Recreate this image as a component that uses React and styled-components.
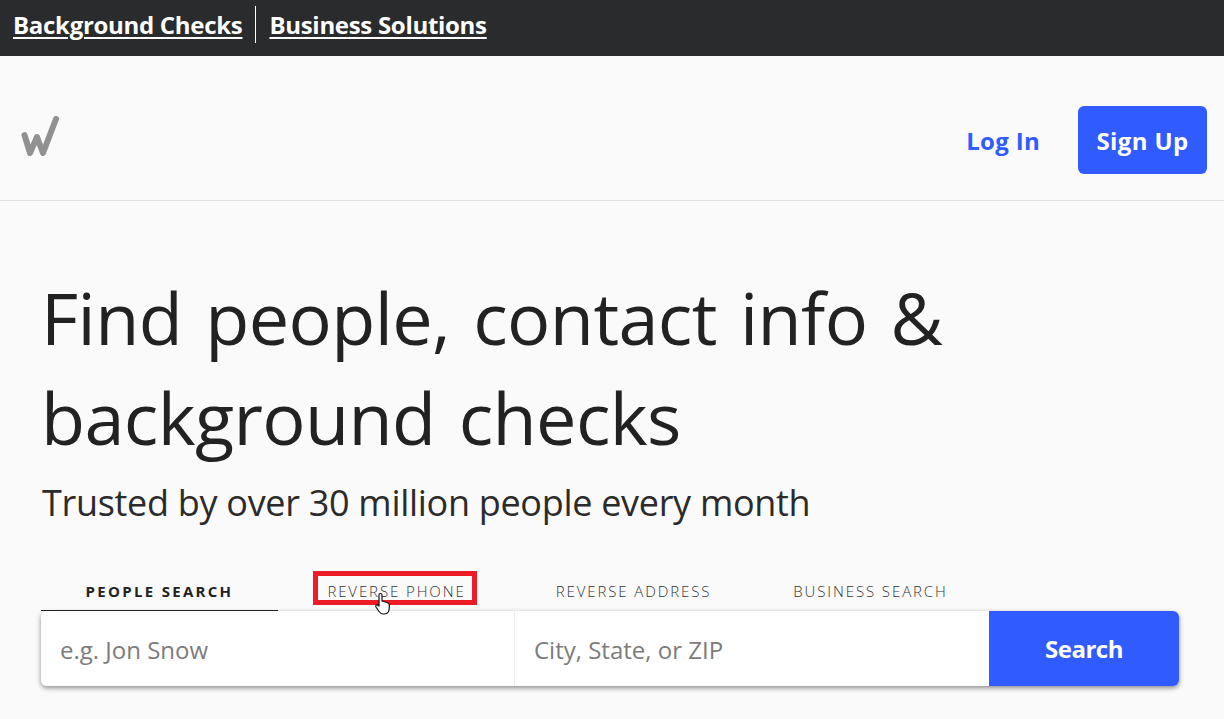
import React from 'react';
import styled, {createGlobalStyle} from 'styled-components';

const Global = createGlobalStyle`
  html, body {
    margin: 0;
    padding: 0;
    background-color: #FAFAFA;
    font-family: "Open Sans", "Noto Sans", sans-serif;
    overflow: hidden;
  }
`;

const Page = styled.div`
  position: relative;
  width: 1224px;
  height: 719px;
  overflow: hidden;
`;

const TopBar = styled.div`
  box-sizing: border-box;
  height: 56px;
  background-color: #2A2B2D;
  display: flex;
  align-items: center;
  padding: 0 0 7px 13px;
`;
const TopLink = styled.a`
  color: #FFF;
  font-size: 24px;
  font-weight: 700;
  letter-spacing: -0.3px;
  text-decoration: underline;
  text-decoration-thickness: 2px;
  text-underline-offset: 3px;
  line-height: 37px;
  padding-right: 13px;
`;
const TopLinkRight = styled(TopLink)`
  border-left: 1px solid #FFF;
  padding: 0 0 0 13px;
`;

const Header = styled.header`
  box-sizing: border-box;
  height: 145px;
  border-bottom: 1px solid #E2E2E2;
  display: flex;
  align-items: center;
  justify-content: space-between;
  padding: 24px 17px 0 21px;
`;
const Logo = styled.svg`
  width: 38px;
  height: 40px;
  display: block;
  margin-bottom: 8px;
`;
const Nav = styled.nav`
  display: flex;
  align-items: center;
  gap: 38px;
`;
const LogIn = styled.a`
  color: #2F5BFF;
  font-size: 24px;
  font-weight: 700;
  letter-spacing: 0.3px;
`;
const SignUp = styled.button`
  height: 68px;
  width: 129px;
  background-color: #2F5BFF;
  color: #FFF;
  border: 0;
  border-radius: 6px;
  font-family: inherit;
  font-size: 24px;
  font-weight: 700;
  letter-spacing: 0.4px;
`;

const Hero = styled.main`
  padding: 66px 45px 0 41px;
`;
const Title = styled.h1`
  margin: 0;
  font-size: 72px;
  font-weight: 400;
  line-height: 100px;
  color: #222;
  letter-spacing: -0.6px;
  word-spacing: 5px;
`;
const Subtitle = styled.p`
  margin: 11px 0 0 1px;
  font-size: 36px;
  line-height: 50px;
  color: #2B2B2B;
  letter-spacing: -0.3px;
`;

const Tabs = styled.div`
  display: flex;
  margin-top: 45px;
  height: 38px;
`;
const Tab = styled.div`
  box-sizing: border-box;
  width: ${p => p.$width}px;
  text-align: center;
  font-size: 15px;
  line-height: 37px;
  letter-spacing: ${p => p.$active ? '2.3px' : '1.9px'};
  font-weight: ${p => p.$active ? 700 : 300};
  color: ${p => p.$active ? '#222' : '#333'};
  border-bottom: 1px solid ${p => p.$active ? '#222' : 'transparent'};
`;

const Form = styled.form`
  display: flex;
  height: 75px;
  border-radius: 6px;
  box-shadow: 0 2px 5px rgba(0, 0, 0, 0.45);
  background-color: #FFF;
`;
const Field = styled.input`
  box-sizing: border-box;
  width: ${p => p.$width}px;
  height: 75px;
  border: 0;
  border-right: ${p => p.$divided ? '1px solid #EEE' : '0'};
  border-radius: 6px 0 0 6px;
  padding: 2px 19px 0;
  font-family: inherit;
  font-size: 24px;
  letter-spacing: 0;
  background-color: #FFF;
  outline: none;
  &::placeholder {
    color: #7C7C7C;
    opacity: 1;
  }
`;
const SearchButton = styled.button`
  width: 190px;
  height: 75px;
  background-color: #2F5BFF;
  color: #FFF;
  border: 0;
  border-radius: 0 6px 6px 0;
  font-family: inherit;
  font-size: 24px;
  font-weight: 700;
  letter-spacing: -0.5px;
`;

const Highlight = styled.div`
  position: absolute;
  left: 313px;
  top: 571px;
  width: 164px;
  height: 34px;
  box-sizing: border-box;
  border: 5px solid #ED1C24;
`;
const Cursor = styled.svg`
  position: absolute;
  left: 374px;
  top: 592px;
  width: 18px;
  height: 23px;
`;

const App = () => (
    <Page>
        <Global/>
        <TopBar>
            <TopLink>Background Checks</TopLink>
            <TopLinkRight>Business Solutions</TopLinkRight>
        </TopBar>
        <Header>
            <Logo viewBox="0 0 38 40">
                <path d="M3.5 19 L9 37 L16 21 L22 37 L35 3" fill="none" stroke="#919191" strokeWidth="6"
                      strokeLinecap="round" strokeLinejoin="round"/>
            </Logo>
            <Nav>
                <LogIn>Log In</LogIn>
                <SignUp>Sign Up</SignUp>
            </Nav>
        </Header>
        <Hero>
            <Title>Find people, contact info &amp;<br/>background checks</Title>
            <Subtitle>Trusted by over 30 million people every month</Subtitle>
            <Tabs>
                <Tab $width={237} $active>PEOPLE SEARCH</Tab>
                <Tab $width={237}>REVERSE PHONE</Tab>
                <Tab $width={237}>REVERSE ADDRESS</Tab>
                <Tab $width={237}>BUSINESS SEARCH</Tab>
            </Tabs>
            <Form>
                <Field $width={474} $divided placeholder="e.g. Jon Snow"/>
                <Field $width={474} placeholder="City, State, or ZIP"/>
                <SearchButton type="button">Search</SearchButton>
            </Form>
        </Hero>
        <Highlight/>
        <Cursor viewBox="0 0 18 23">
            <path d="M5 11 V3 C5 1 8 1 8 3 V9 L13 10.5 C15 11 15.5 12 15.5 14 L15 18 C14.5 21 12 22 9.5 22 C7 22 6 21 5 19.5 L2 15 C1 13 3 12 5 14 Z"
                  fill="#FFF" stroke="#111" strokeWidth="1.2" strokeLinejoin="round"/>
        </Cursor>
    </Page>
);

export default App;
